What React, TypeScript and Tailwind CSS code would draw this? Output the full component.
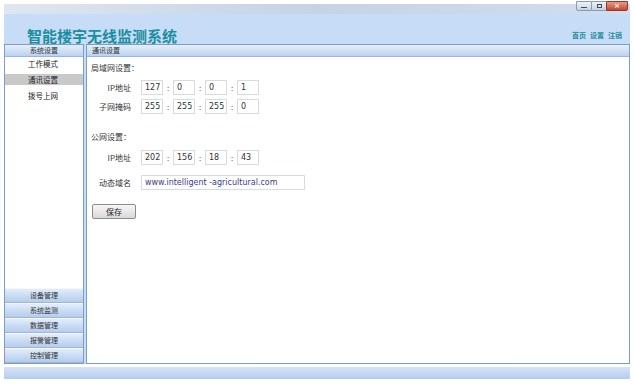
import React from "react";

const cjk = { fontFamily: '"Noto Sans CJK SC", "DejaVu Sans", sans-serif' };

function Box({ v, w = "w-[22px]" }: { v: string; w?: string }) {
  return (
    <div className={`${w} h-[15px] border border-[#d6dbe2] bg-white flex items-center pl-[3px] text-[8px] leading-none text-[#333]`} style={{ fontFamily: '"DejaVu Sans", sans-serif' }}>
      {v}
    </div>
  );
}

function IpRow({ label, vals }: { label: string; vals: string[] }) {
  return (
    <div className="flex items-center h-[15px]">
      <div className="w-[40px] text-right text-[8px] leading-none text-[#333]">{label}</div>
      <div className="ml-[10px] flex items-center">
        {vals.map((v, i) => (
          <React.Fragment key={i}>
            {i > 0 && <div className="w-[10px] text-center text-[8px] leading-none text-[#555]">:</div>}
            <Box v={v} />
          </React.Fragment>
        ))}
      </div>
    </div>
  );
}

const headBar = "h-[12px] bg-gradient-to-b from-[#e6effa] to-[#bcd2ef] border-b border-[#9ab6dc] flex items-center text-[7px] leading-none text-[#333]";
const menuItem = "h-[15px] bg-gradient-to-b from-[#e3edfa] via-[#cadcf4] to-[#b7cdec] border-t border-[#f4f8fd] border-b border-b-[#9db6da] flex items-center justify-center text-[7px] leading-none text-[#333]";

export default function App() {
  return (
    <div className="w-[634px] h-[385px] bg-white overflow-hidden pt-[4px] px-[4px]" style={cjk}>
      {/* title bar */}
      <div className="h-[10px] bg-gradient-to-r from-[#dfe6ef] via-[#c4d3e6] to-[#d2deec] flex items-start justify-end pr-[2px]">
        <div className="flex -mt-[3px]">
          <div className="w-[16px] h-[10px] border border-[#8a9ab0] bg-gradient-to-b from-[#eef2f7] to-[#c6d2e0] rounded-bl-[2px] flex items-end justify-center pb-[2px]">
            <div className="w-[6px] h-[1px] bg-[#3d4c60]" />
          </div>
          <div className="w-[14px] h-[10px] border-y border-[#8a9ab0] bg-gradient-to-b from-[#eef2f7] to-[#c6d2e0] flex items-center justify-center">
            <div className="w-[5px] h-[4px] border border-[#3d4c60]" />
          </div>
          <div className="w-[22px] h-[10px] border border-[#8a3a30] bg-gradient-to-b from-[#e99a88] to-[#c7432e] rounded-br-[2px] flex items-center justify-center text-white text-[7px] leading-none font-bold" style={{ fontFamily: '"DejaVu Sans", sans-serif' }}>
            ×
          </div>
        </div>
      </div>
      {/* header */}
      <div className="h-[30px] bg-[#c7dcf6] flex items-end justify-between pl-[23px] pr-[8px]">
        <div className="text-[15px] font-bold text-[#1b8e9f] leading-none pb-[1px]">智能楼宇无线监测系统</div>
        <div className="text-[7px] leading-none font-bold text-[#1b8e9f] pb-[5px] flex gap-[4px]">
          <span>首页</span>
          <span>设置</span>
          <span>注销</span>
        </div>
      </div>
      {/* body */}
      <div className="h-[320px] bg-[#c7dcf6] flex gap-[2px]">
        <div className="w-[80px] border border-[#7d9cc8] bg-white flex flex-col">
          <div className={`${headBar} justify-center`}>系统设置</div>
          <div className="flex flex-col text-[7.5px] leading-none text-[#222]">
            <div className="h-[11px] mt-[1px] pl-[23px] flex items-center">工作模式</div>
            <div className="h-[11px] mt-[5px] pl-[23px] flex items-center bg-[#c9c9c9]">通讯设置</div>
            <div className="h-[11px] mt-[5px] pl-[23px] flex items-center">拨号上网</div>
          </div>
          <div className="flex-1" />
          <div className="flex flex-col">
            <div className={menuItem}>设备管理</div>
            <div className={menuItem}>系统监测</div>
            <div className={menuItem}>数据管理</div>
            <div className={menuItem}>报警管理</div>
            <div className={menuItem}>控制管理</div>
          </div>
        </div>
        <div className="flex-1 border border-[#7d9cc8] bg-white flex flex-col">
          <div className={`${headBar} pl-[5px]`}>通讯设置</div>
          <div className="pl-[4px] pt-[5px] text-[8px] text-[#333]">
            <div className="h-[12px] flex items-center leading-none">局域网设置：</div>
            <div className="mt-[6px] flex flex-col gap-[4px]">
              <IpRow label="IP地址" vals={["127", "0", "0", "1"]} />
              <IpRow label="子网掩码" vals={["255", "255", "255", "0"]} />
            </div>
            <div className="h-[12px] mt-[17px] flex items-center leading-none">公网设置：</div>
            <div className="mt-[7px]">
              <IpRow label="IP地址" vals={["202", "156", "18", "43"]} />
            </div>
            <div className="flex items-center h-[15px] mt-[10px]">
              <div className="w-[40px] text-right text-[8px] leading-none text-[#333]">动态域名</div>
              <div className="ml-[10px] w-[164px] h-[15px] border border-[#d6dbe2] flex items-center pl-[3px] text-[8px] leading-none text-[#3b3b86]" style={{ fontFamily: '"DejaVu Sans", sans-serif' }}>
                www.intelligent -agricultural.com
              </div>
            </div>
            <div className="mt-[14px] ml-[1px] w-[44px] h-[15px] border border-[#8c8c8c] rounded-[2px] bg-gradient-to-b from-[#f6f6f6] to-[#d9d9d9] flex items-center justify-center text-[8px] leading-none text-[#222]">
              保存
            </div>
          </div>
        </div>
      </div>
      {/* bottom bar */}
      <div className="h-[3px] bg-white" />
      <div className="h-[12px] bg-gradient-to-b from-[#d5e4f8] to-[#b4cdee]" />
    </div>
  );
}
